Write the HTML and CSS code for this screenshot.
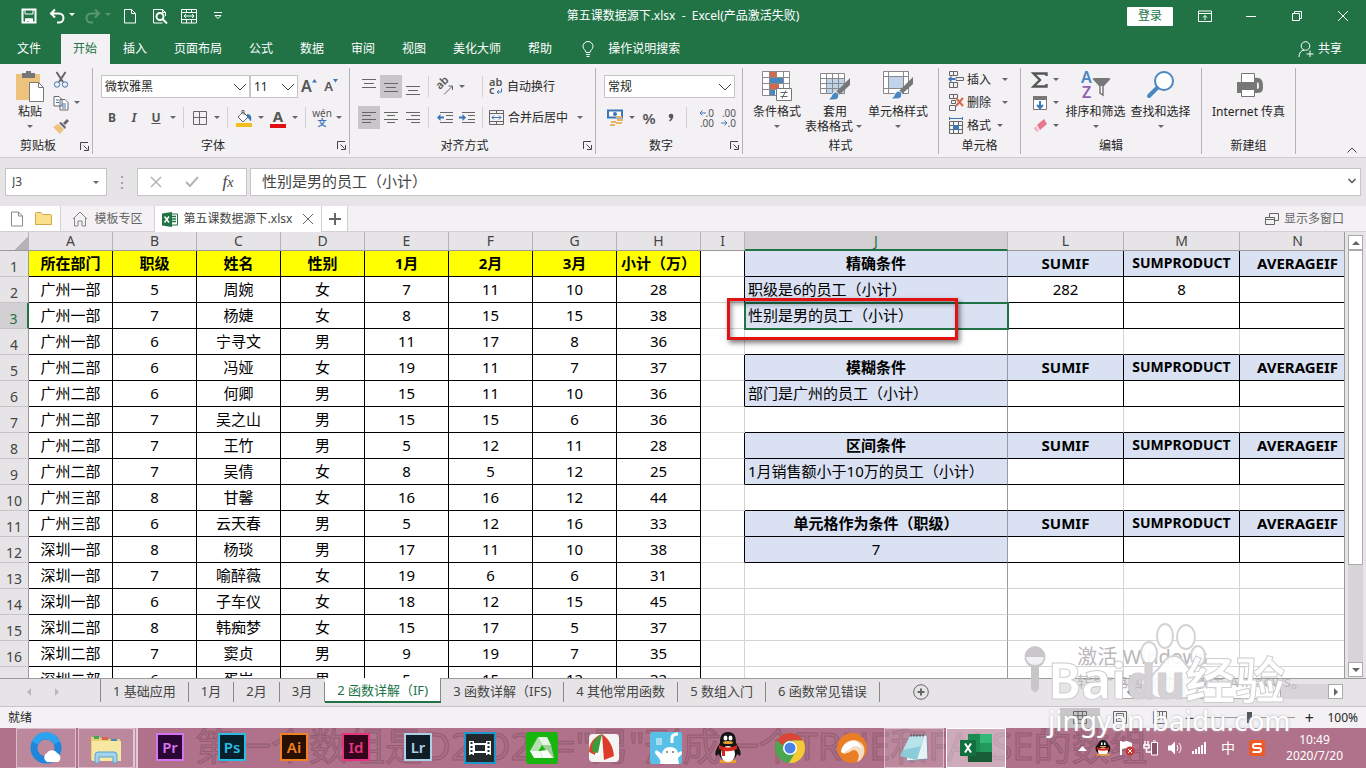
FILE: index.html
```html
<!DOCTYPE html>
<html lang="zh-CN">
<head>
    <meta charset="UTF-8">
    <meta name="viewport" content="width=device-width, initial-scale=1.0">
    <title>第五课数据源下.xlsx - Excel</title>
    <link rel="stylesheet" href="styles.css">
</head>
<body>
    <header class="titlebar">
        <div class="quick">
            <button aria-label="保存"><svg width="16" height="16" viewBox="0 0 16 16"><path d="M1.5 1.5h13v13h-13z" class="w2"/><path d="M4 1v5h8V1M4.500 15v-4h7v4" class="w"/><path d="M4 10.500h8V15H8v-2H6v2H4z" fill="#fff"/></svg></button>
            <button class="wide" aria-label="撤消"><svg width="26" height="16" viewBox="0 0 26 16"><path d="M6 1.500L2 5.500l4 4M2.500 5.500H10a4.500 4.500 0 0 1 0 9H8" class="w2"/><path d="M20 5h6l-3 3z" fill="#fff"/></svg></button>
            <button class="wide dim" aria-label="恢复"><svg width="26" height="16" viewBox="0 0 26 16"><path d="M10 1.500l4 4-4 4M13.500 5.500H6a4.500 4.500 0 0 0 0 9h2" class="w2"/><path d="M20 5h6l-3 3z" fill="#fff"/></svg></button>
            <button aria-label="新建"><svg width="16" height="16" viewBox="0 0 16 16"><path d="M2.500 1.500h7l4 4v9.500h-11zM9.500 1.500v4h4" class="w"/></svg></button>
            <button aria-label="打印预览"><svg width="16" height="16" viewBox="0 0 16 16"><path d="M13.500 8V4.500l-3-3h-9v13.500h9M10.500 1.500v3h3" class="w"/><circle cx="8" cy="8.500" r="3.500" class="w2"/><path d="M10.500 11l4.500 4.500" class="w2"/></svg></button>
            <button aria-label="合并"><svg width="16" height="16" viewBox="0 0 16 16"><path d="M.5 1.500h15v13.500H.5zM.5 4.500h15M.5 11.500h15M5.500 1v3M10.500 1v3M5.500 12v3M10.500 12v3M3 8h10M5 6L3 8l2 2M11 6l2 2-2 2" class="w"/></svg></button>
            <button aria-label="自定义快速访问工具栏"><svg width="10" height="8" viewBox="0 0 10 8"><path d="M1 .5h8M2 3.500h6L5 6.500z" class="w"/></svg></button>
        </div>
        <div class="doc-title">第五课数据源下.xlsx&nbsp; -&nbsp; Excel(产品激活失败)</div>
        <div class="win">
            <button class="login">登录</button>
            <button aria-label="功能区显示选项"><svg width="14" height="12" viewBox="0 0 14 12"><path d="M.5 1h13v10.500H.5zM.5 3.500h13M7 10V5.500M5 7.500l2-2 2 2" class="w"/></svg></button>
            <button aria-label="最小化"><svg width="12" height="12" viewBox="0 0 12 12"><path d="M1 6.500h10" class="w"/></svg></button>
            <button aria-label="还原"><svg width="12" height="12" viewBox="0 0 12 12"><path d="M1.500 3.500h7v7h-7zM3.500 3V1.500h7v7H9" class="w"/></svg></button>
            <button aria-label="关闭"><svg width="12" height="12" viewBox="0 0 12 12"><path d="M1 1l10 10M11 1L1 11" class="w"/></svg></button>
        </div>
    </header>

    <nav class="tabs">
        <button>文件</button>
        <button class="on">开始</button>
        <button>插入</button>
        <button>页面布局</button>
        <button>公式</button>
        <button>数据</button>
        <button>审阅</button>
        <button>视图</button>
        <button>美化大师</button>
        <button>帮助</button>
        <button class="tell"><svg width="12" height="16" viewBox="0 0 12 16"><path d="M4 11.500C4 9 1 8.500 1 5.500a5 5 0 0 1 10 0c0 3-3 3.500-3 6zM4 13.500h4M4.500 15.500h3" class="w"/></svg>操作说明搜索</button>
        <button class="share"><svg width="16" height="16" viewBox="0 0 16 16"><circle cx="7.500" cy="5" r="4.300" class="w"/><path d="M1 16c0-4 2-6.500 5-7M8.500 13h7M12 9.500v6.500" class="w"/></svg>共享</button>
    </nav>

    <section class="ribbon">
        <div class="group g-clip">
            <div class="body">
                <button class="big"><svg width="30" height="32" viewBox="0 0 30 32"><path d="M1 4h24v26H1z" fill="#edc27c"/><path d="M7 3h4V1h5v2h4v5H7z" fill="#777"/><path d="M14.500 12.500h9l5 5v14h-14z" fill="#fff" stroke="#777"/><path d="M23.500 12.500v5h5" fill="none" stroke="#777"/></svg>粘贴<i class="arr"></i></button>
                <div class="stack">
                    <button aria-label="剪切"><svg width="16" height="16" viewBox="0 0 16 16"><path d="M3.500 0l6.500 10M12.500 0L6 10" stroke="#666" stroke-width="2" fill="none"/><circle cx="4" cy="12.500" r="2.700" class="b"/><circle cx="12" cy="12.500" r="2.700" class="b"/></svg></button>
                    <button aria-label="复制"><svg width="16" height="16" viewBox="0 0 16 16"><path d="M1 1.500h5l3 3V11H1zM7 4.500h5l3 3V15H7z" fill="#fff" stroke="#666"/><path d="M3 5h3M3 7.500h3M9 9h4M9 11h4M9 13h4" class="b"/></svg><i class="arr"></i></button>
                    <button aria-label="格式刷"><svg width="16" height="16" viewBox="0 0 16 16"><path d="M0 9l5-3 6 5-4 5z" fill="#edc27c"/><path d="M6 5l2-1 5 5-1 2zM10 5l4-4 2 2-4 4z" fill="#666"/></svg></button>
                </div>
            </div>
            <div class="foot"><span>剪贴板</span><button aria-label="剪贴板选项"><svg width="9" height="9" viewBox="0 0 9 9"><path d="M.5 8V.5H8M3.500 3.500l4 4M8.500 4v4.500H4" class="k"/></svg></button></div>
        </div>

        <div class="group g-font">
            <div class="body rows">
                <div class="row">
                    <label class="combo c-font"><select aria-label="字体"><option>微软雅黑</option></select><svg width="14" height="8" viewBox="0 0 14 8"><path d="M1 1l6 6 6-6" class="k"/></svg></label>
                    <label class="combo c-size"><select aria-label="字号"><option>11</option></select><svg width="14" height="8" viewBox="0 0 14 8"><path d="M1 1l6 6 6-6" class="k"/></svg></label>
                    <button class="tool grow" aria-label="增大字号">A<svg width="5" height="4" viewBox="0 0 5 4"><path d="M0 3.500h5L2.500 0z" fill="#3d76b5"/></svg></button>
                    <button class="tool grow small" aria-label="减小字号">A<svg width="5" height="4" viewBox="0 0 5 4"><path d="M0 0h5L2.500 3.500z" fill="#3d76b5"/></svg></button>
                </div>
                <div class="row">
                    <button class="tool"><b>B</b></button>
                    <button class="tool"><b><em>I</em></b></button>
                    <button class="tool"><b><u>U</u></b></button><i class="arr"></i>
                    <span class="sep"></span>
                    <button class="tool" aria-label="边框"><svg width="14" height="14" viewBox="0 0 14 14"><path d="M.5.5h13v13H.5zM6.500.5v13M.5 6.500h13" class="g"/></svg></button><i class="arr"></i>
                    <span class="sep"></span>
                    <button class="tool" aria-label="填充颜色"><svg width="18" height="18" viewBox="0 0 18 18"><path d="M3 8l5-5 5 5-5 5zM7 5V1.500h2V6" fill="#fff" stroke="#666"/><path d="M12 5c4 0 5 3 4 7-2 0-1-3-4-3z" fill="#3d76b5"/><path d="M1 14h16v4H1z" fill="#f2bd1d"/></svg></button><i class="arr"></i>
                    <button class="tool fontcolor" aria-label="字体颜色"><b>A</b></button><i class="arr"></i>
                    <span class="sep"></span>
                    <button class="tool wen" aria-label="拼音"><span>wén</span><b>文</b></button><i class="arr"></i>
                </div>
            </div>
            <div class="foot"><span>字体</span><button aria-label="字体选项"><svg width="9" height="9" viewBox="0 0 9 9"><path d="M.5 8V.5H8M3.500 3.500l4 4M8.500 4v4.500H4" class="k"/></svg></button></div>
        </div>

        <div class="group g-align">
            <div class="body rows">
                <div class="row">
                    <button class="tool" aria-label="顶端对齐"><svg width="14" height="16" viewBox="0 0 14 16"><path d="M0 .5h14M2 4.500h10M0 8.500h14" class="g"/></svg></button>
                    <button class="tool on" aria-label="垂直居中"><svg width="14" height="16" viewBox="0 0 14 16"><path d="M0 4.500h14M2 8.500h10M0 12.500h14" class="g"/></svg></button>
                    <button class="tool" aria-label="底端对齐"><svg width="14" height="16" viewBox="0 0 14 16"><path d="M0 7.500h14M2 11.500h10M0 15.500h14" class="g"/></svg></button>
                    <span class="sep"></span>
                    <button class="tool" aria-label="方向"><svg width="17" height="16" viewBox="0 0 17 16"><text x="3" y="11" transform="rotate(-45 3 11)" font-size="11" font-weight="600" fill="#555">ab</text><path d="M7 15.500L15.500 7M15.500 11V7h-4" class="g"/></svg></button><i class="arr"></i>
                    <span class="gap"></span>
                    <span class="sep"></span>
                    <button class="text"><svg width="14" height="16" viewBox="0 0 14 16"><text x="0" y="7" font-size="11" font-weight="600" fill="#555">ab</text><text x="0" y="15" font-size="11" font-weight="600" fill="#555">c</text><path d="M12.500 9.500v3.500H8M10 11l-2 2 2 2" class="b"/></svg>自动换行</button>
                </div>
                <div class="row">
                    <button class="tool on" aria-label="左对齐"><svg width="14" height="14" viewBox="0 0 14 14"><path d="M0 1.500h14M0 4.500h9M0 8.500h14M0 11.500h9" class="g"/></svg></button>
                    <button class="tool" aria-label="居中"><svg width="14" height="14" viewBox="0 0 14 14"><path d="M0 1.500h14M3 4.500h8M0 8.500h14M3 11.500h8" class="g"/></svg></button>
                    <button class="tool" aria-label="右对齐"><svg width="14" height="14" viewBox="0 0 14 14"><path d="M0 1.500h14M5 4.500h9M0 8.500h14M5 11.500h9" class="g"/></svg></button>
                    <span class="sep"></span>
                    <button class="tool" aria-label="减少缩进"><svg width="16" height="14" viewBox="0 0 16 14"><path d="M3 1.500h13M9 4.500h7M9 8.500h7M3 11.500h13" class="g"/><path d="M0 6.500L3.500 3v2.500H7v2H3.500V10z" fill="#3d76b5"/></svg></button>
                    <button class="tool" aria-label="增加缩进"><svg width="16" height="14" viewBox="0 0 16 14"><path d="M3 1.500h13M9 4.500h7M9 8.500h7M3 11.500h13" class="g"/><path d="M7 6.500L3.500 3v2.500H0v2h3.500V10z" fill="#3d76b5"/></svg></button>
                    <span class="sep"></span>
                    <button class="text"><svg width="15" height="15" viewBox="0 0 15 15"><path d="M.5.5h14v14H.5zM.5 3.500h14M.5 11.500h14M7.500 0v3M7.500 12v3" class="g"/><path d="M3 7.500h9M5 5.500l-2 2 2 2M10 5.500l2 2-2 2" class="b"/></svg>合并后居中</button><i class="arr far"></i>
                </div>
            </div>
            <div class="foot"><span>对齐方式</span><button aria-label="对齐选项"><svg width="9" height="9" viewBox="0 0 9 9"><path d="M.5 8V.5H8M3.500 3.500l4 4M8.500 4v4.500H4" class="k"/></svg></button></div>
        </div>

        <div class="group g-num">
            <div class="body rows">
                <div class="row">
                    <label class="combo c-num"><select aria-label="数字格式"><option>常规</option></select><svg width="14" height="8" viewBox="0 0 14 8"><path d="M1 1l6 6 6-6" class="k"/></svg></label>
                </div>
                <div class="row">
                    <button class="tool" aria-label="会计数字格式"><svg width="18" height="17" viewBox="0 0 18 17"><path d="M2 1.500h14v7H2z" fill="#fff" stroke="#3d76b5" stroke-width="2"/><circle cx="9" cy="5" r="2" fill="#3d76b5"/><path d="M10 8h6M11 11h6M10 14h6M5 13h5M4 16h5" stroke="#e8b467" stroke-width="2"/></svg></button><i class="arr"></i>
                    <button class="tool pct">%</button>
                    <button class="tool" aria-label="千位分隔样式"><svg width="6" height="10" viewBox="0 0 6 10"><circle cx="3" cy="3" r="2.300" fill="#555"/><path d="M4.500 3q0 3-3 5" fill="none" stroke="#555" stroke-width="1.500"/></svg></button>
                    <span class="sep"></span>
                    <button class="tool dec" aria-label="增加小数位数"><span><svg width="7" height="6" viewBox="0 0 7 6"><path d="M7 3H1M3.500.5L1 3l2.500 2.500" class="b"/></svg>.0</span><span>.00</span></button>
                    <button class="tool dec" aria-label="减少小数位数"><span>.00</span><span><svg width="7" height="6" viewBox="0 0 7 6"><path d="M0 3h6M3.500.5L6 3 3.500 5.500" class="b"/></svg>.0</span></button>
                </div>
            </div>
            <div class="foot"><span>数字</span><button aria-label="数字选项"><svg width="9" height="9" viewBox="0 0 9 9"><path d="M.5 8V.5H8M3.500 3.500l4 4M8.500 4v4.500H4" class="k"/></svg></button></div>
        </div>

        <div class="group g-style">
            <div class="body">
                <button class="big"><svg width="30" height="32" viewBox="0 0 30 32"><path d="M.5 1.500h27v24H.5z" fill="#fff"/><path d="M8 2h6v5H8zM8 14h9v6H8z" fill="#d2694c"/><path d="M8 8h13v5H8zM8 20h5v5H8z" fill="#4a86bf"/><path d="M.5 1.500h27v24H.5zM.5 7.500h27M.5 13.500h27M.5 19.500h27M7.500 1.500v24M14.500 1.500v6M21.500 1.500v24" class="l"/><path d="M14.500 18.500h15v12h-15z" fill="#fff" stroke="#777"/><path d="M18.500 22.500h7M18.500 26.500h7M24 20.500l-4 8" class="g"/></svg>条件格式<i class="arr"></i></button>
                <button class="big"><svg width="30" height="32" viewBox="0 0 30 32"><path d="M.5 3.500h24v20H.5z" fill="#fff"/><path d="M7 9h18v15H7z" fill="#bfd3ea"/><path d="M.5 3.500h24v20H.5zM.5 8.500h24M.5 13.500h24M.5 18.500h24M6.500 3.500v20M12.500 3.500v20M18.500 3.500v20" class="l"/><path d="M30 8v7L19 25l-3-3z" fill="#777"/><path d="M7 30c5-1 4-8 9-8 4 1 4 7-1 8z" fill="#4a86bf" stroke="#fff"/></svg>套用<span>表格格式<i class="arr in"></i></span></button>
                <button class="big"><svg width="30" height="32" viewBox="0 0 30 32"><path d="M.5 1.500h25v22H.5z" fill="#fff"/><path d="M6 7h15v11H6z" fill="#bfd3ea"/><path d="M.5 1.500h25v22H.5zM.5 6.500h25M.5 18.500h25M5.500 1.500v22M20.500 1.500v22" class="l"/><path d="M30 7v7L19 24l-3-3z" fill="#777"/><path d="M7 29c5-1 4-8 9-8 4 1 4 7-1 8z" fill="#4a86bf" stroke="#fff"/></svg>单元格样式<i class="arr"></i></button>
            </div>
            <div class="foot"><span>样式</span></div>
        </div>

        <div class="group g-cells">
            <div class="body stack">
                <button><svg width="16" height="17" viewBox="0 0 16 17"><path d="M1.500.5h8v4h-8zM5.500.5v4M1.500 11.500h8v5h-8zM5.500 11.500v5M8 6.500h7.500v3H8z" class="g"/><path d="M0 8l3.500-3.500V7H7v2H3.500v2.500z" fill="#3d76b5"/></svg>插入<i class="arr in"></i></button>
                <button><svg width="16" height="17" viewBox="0 0 16 17"><path d="M1.500.5h8v4h-8zM5.500.5v4M1.500 11.500h6v5h-6zM3.500 6.500h4v3h-4z" class="g"/><path d="M8 4l7 8M15 4l-7 8" stroke="#d2694c" stroke-width="2"/></svg>删除<i class="arr in"></i></button>
                <button><svg width="16" height="17" viewBox="0 0 16 17"><path d="M1.500 4.500h13v12h-13zM1.500 8.500h13M1.500 12.500h13M5.500 4.500v12M10.500 4.500v12" class="g"/><path d="M5 8h6v5H5z" fill="#3d76b5"/><path d="M1 1.500h13M1.500 0v3M14.500 0v3" class="b"/></svg>格式<i class="arr near"></i></button>
            </div>
            <div class="foot"><span>单元格</span></div>
        </div>

        <div class="group g-edit">
            <div class="body">
                <div class="stack">
                    <button aria-label="求和"><svg width="16" height="16" viewBox="0 0 16 16"><path d="M14.500 4V1.500h-13L8 8l-6.500 6.500h13V12" fill="none" stroke="#555" stroke-width="2.400"/></svg><i class="arr"></i></button>
                    <button aria-label="填充"><svg width="16" height="16" viewBox="0 0 16 16"><path d="M1.500 1.500h13v13h-13z" fill="#fff" stroke="#777"/><path d="M1 1h14v4H1z" fill="#777"/><path d="M8 6v7M5 10l3 3 3-3" stroke="#3d76b5" stroke-width="2" fill="none"/></svg><i class="arr"></i></button>
                    <button aria-label="清除"><svg width="16" height="16" viewBox="0 0 16 16"><path d="M5 7l7-6 3 5-7 6z" fill="#e8788c"/><path d="M1.500 10.500L4 8l3 5-2 1z" fill="#f4b3bf"/></svg><i class="arr"></i></button>
                </div>
                <button class="big"><svg width="30" height="32" viewBox="0 0 30 32"><text x="0" y="13" font-size="16" font-weight="600" fill="#4a86bf">A</text><text x="1" y="28" font-size="16" font-weight="600" fill="#9460b5">Z</text><path d="M13 9.500h15l-6 6.500v9l-3-2v-7z" fill="#fff" stroke="#777" stroke-width="1.500"/><path d="M12 8h17l-7 8h-3z" fill="#777"/></svg>排序和筛选<i class="arr"></i></button>
                <button class="big"><svg width="30" height="32" viewBox="0 0 30 32"><circle cx="18" cy="11" r="9" fill="#fff" stroke="#4a86bf" stroke-width="2"/><path d="M11 18l-8 8" stroke="#4a86bf" stroke-width="4" stroke-linecap="round"/></svg>查找和选择<i class="arr"></i></button>
            </div>
            <div class="foot"><span>编辑</span></div>
        </div>

        <div class="group g-new">
            <div class="body">
                <button class="big"><svg width="30" height="32" viewBox="0 0 30 32"><path d="M3 12h20v11H3zM21 8c7-1 8 4 8 8s0 7-6 7v-4c2 0 2-1 2-3s0-4-4-4z" fill="#777"/><path d="M7.500 3.500h13v9h-13zM7.500 19.500h13v7h-13z" fill="#fff" stroke="#777"/></svg>Internet 传真</button>
            </div>
            <div class="foot"><span>新建组</span></div>
        </div>
        <button class="collapse" aria-label="折叠功能区"><svg width="10" height="6" viewBox="0 0 10 6"><path d="M.5 5.500L5 1l4.500 4.500" class="k"/></svg></button>
    </section>

    <section class="formula">
        <label class="namebox"><input type="text" aria-label="名称框" value="J3"><i class="arr"></i></label>
        <span class="dots">⋮</span>
        <div class="fx">
            <button aria-label="取消"><svg width="12" height="12" viewBox="0 0 12 12"><path d="M1 1l10 10M11 1L1 11" stroke="#b5b3b6" stroke-width="1.500"/></svg></button>
            <button aria-label="输入"><svg width="14" height="12" viewBox="0 0 14 12"><path d="M1 6l4 4 8-9" fill="none" stroke="#b5b3b6" stroke-width="2"/></svg></button>
            <button class="fn"><em>f<small>x</small></em></button>
        </div>
        <label class="bar"><input type="text" aria-label="编辑栏" value="性别是男的员工（小计）"><svg width="8" height="6" viewBox="0 0 8 6"><path d="M.5 1L4 4.500 7.500 1" stroke="#555" stroke-width="1.500" fill="none"/></svg></label>
    </section>

    <nav class="doctabs">
        <div class="files">
            <button aria-label="新建"><svg width="14" height="16" viewBox="0 0 14 16"><path d="M1.500 1h7l4 4v10h-11zM8.500 1v4h4" fill="#fff" stroke="#888"/></svg></button>
            <button aria-label="打开"><svg width="17" height="15" viewBox="0 0 17 15"><path d="M.5 2.500q0-1 1-1H6l2 2h7.500q1 0 1 1v9H.5z" fill="#fbe08c" stroke="#cfa94a"/></svg></button>
        </div>
        <button class="dt"><svg width="16" height="16" viewBox="0 0 16 16"><path d="M1 8l7-7 7 7M2.500 7v8h3.500v-5h4v5h3.500V7" fill="none" stroke="#888"/></svg>模板专区</button>
        <button class="dt on"><svg width="16" height="15" viewBox="0 0 16 15"><path d="M8 2h7.500v11H8z" fill="#fff" stroke="#217346"/><path d="M10 4.500h4M10 7h4M10 9.500h4" stroke="#217346" stroke-width="1.500"/><path d="M0 1.500L10 0v15L0 13.500z" fill="#217346"/><path d="M2.500 4.500l4.500 6M7 4.500l-4.500 6" stroke="#fff" stroke-width="1.500"/></svg>第五课数据源下.xlsx<svg class="x" width="12" height="12" viewBox="0 0 12 12"><path d="M1 1l10 10M11 1L1 11" class="g"/></svg></button>
        <button class="plus" aria-label="新标签"><svg width="12" height="12" viewBox="0 0 12 12"><path d="M6 0v12M0 6h12" stroke="#666" stroke-width="2"/></svg></button>
        <button class="multi"><svg width="14" height="12" viewBox="0 0 14 12"><path d="M.5 4.500h9v7h-9zM.5 6.500h9M4.500 4V.5h9v7H10" class="g"/></svg>显示多窗口</button>
    </nav>

    <main class="sheet">
        <div class="pane">
            <table id="grid">
                <colgroup><col class="cw-row"><col span="8" class="cw-a"><col class="cw-i"><col class="cw-j"><col span="6" class="cw-l"></colgroup>
                <thead></thead>
                <tbody></tbody>
            </table>
            <div class="callout"></div>
        </div>
        <div class="vscroll">
            <button aria-label="向上滚动"><i class="up"></i></button>
            <div class="thumb"></div>
            <div class="track"></div>
            <button aria-label="向下滚动"><i class="down"></i></button>
        </div>
    </main>

    <nav class="sheets">
        <div class="steps"><button aria-label="上一张"><i class="prev"></i></button><button aria-label="下一张"><i class="next"></i></button></div>
        <button class="st">1 基础应用</button>
        <button class="st">1月</button>
        <button class="st">2月</button>
        <button class="st">3月</button>
        <button class="st on">2 函数详解（IF)</button>
        <button class="st">3 函数详解（IFS)</button>
        <button class="st">4 其他常用函数</button>
        <button class="st">5 数组入门</button>
        <button class="st">6 函数常见错误</button>
        <button class="add" aria-label="新工作表"><svg width="16" height="16" viewBox="0 0 16 16"><circle cx="8" cy="8" r="7.300" class="g"/><path d="M8 4.500v7M4.500 8h7" stroke="#666" stroke-width="2"/></svg></button>
        <div class="hscroll">
            <button aria-label="向左滚动"><i class="prev"></i></button>
            <div class="thumb"></div>
            <button aria-label="向右滚动"><i class="next"></i></button>
        </div>
    </nav>

    <footer class="status">
        <span>就绪</span>
        <div class="views">
            <button class="on" aria-label="普通"><svg width="14" height="13" viewBox="0 0 14 13"><path d="M.5.5h13v12H.5zM.5 4.500h13M.5 8.500h13M5 .5v12M9.500.5v12" class="g"/></svg></button>
            <button aria-label="页面布局"><svg width="14" height="13" viewBox="0 0 14 13"><path d="M.5.5h13v12H.5zM3.500 2.500h7v8h-7zM5 5h4M5 7.500h4" class="g"/></svg></button>
            <button aria-label="分页预览"><svg width="14" height="13" viewBox="0 0 14 13"><path d="M.5.5h13v12H.5zM6.500 0v8M.5 8.500h6M9.500 0v8h4" class="g"/></svg></button>
        </div>
        <div class="zoom">
            <button aria-label="缩小">−</button>
            <input type="range" min="0" max="100" value="50" aria-label="缩放">
            <button aria-label="放大">+</button>
            <span>100%</span>
        </div>
    </footer>

    <footer class="taskbar">
        <div class="ghost">第一个数组是D2:D22="男"形成一个TRUE和FALSE的数组</div>
        <button class="task open" aria-label="QQ浏览器"><svg width="32" height="32" viewBox="0 0 32 32"><circle cx="16" cy="16" r="12" fill="none" stroke="#1f86dc" stroke-width="7"/><path d="M5 11A12 12 0 0 1 27 11" fill="none" stroke="#2ba3ee" stroke-width="7"/><path d="M17 30a5 5 0 0 1 0-9 6 6 0 0 1 10 0 5 5 0 0 1 1 9z" fill="#fff"/></svg></button>
        <button class="task open multi2" aria-label="文件资源管理器"><svg width="32" height="32" viewBox="0 0 32 32"><path d="M1 5h9l2 2h18v21H1z" fill="#e9cf72"/><path d="M4 4h5v3H4z" fill="#3fa85a"/><path d="M12 5h6v3h-6z" fill="#d2694c"/><path d="M21 7h6v3h-6z" fill="#4a86bf"/><path d="M2 9h29v20H2z" fill="#f6e7a2"/><path d="M5 31V23q0-3 3-3h16q3 0 3 3v8h-4v-6H9v6z" fill="#9fd3ee" stroke="#5ba3cd"/></svg></button>
        <button class="task adobe pr"><span>Pr</span></button>
        <button class="task adobe ps"><span>Ps</span></button>
        <button class="task adobe ai"><span>Ai</span></button>
        <button class="task adobe id"><span>Id</span></button>
        <button class="task adobe lr"><span>Lr</span></button>
        <button class="task" aria-label="影音"><svg width="32" height="32" viewBox="0 0 32 32"><path d="M1 1h30v30H1z" fill="#23282d" stroke="#2196c8" stroke-width="2"/><path d="M5 9h5v14H5zM22 9h5v14h-5z" fill="#fff"/><path d="M10 12h12v8H10z" fill="#23282d" stroke="#fff" stroke-width="2"/><path d="M7.500 10v13M24.500 10v13" stroke="#23282d" stroke-width="2" stroke-dasharray="2 2"/></svg></button>
        <button class="task" aria-label="绿色应用"><svg width="32" height="32" viewBox="0 0 32 32"><rect width="32" height="32" rx="3" fill="#18b410"/><path d="M12 5h9l4 8h-9z" fill="#e6f5e3"/><path d="M12 5l4 8-6 10-6-4z" fill="#b7e0b1"/><path d="M4 19h10l3 7H8z" fill="#f4fbf2"/><path d="M16 13h9l3 13H17l4-6z" fill="#9fce98"/><path d="M14 19l7-1 6 8H17z" fill="#fff"/></svg></button>
        <button class="task" aria-label="录屏"><svg width="32" height="32" viewBox="0 0 32 32"><rect x="1" y="2" width="30" height="28" rx="4" fill="#f4f4f2"/><path d="M14 2C6 5 1 11 1 20l6 3z" fill="#d9452f"/><path d="M14 2L7 23l5 1z" fill="#fff"/><path d="M14 2C4 8 3 14 5 20l5 1z" fill="#3c9c3a"/><path d="M14 2l2 26 10-4C25 14 21 7 14 2z" fill="#dd3a28"/></svg></button>
        <button class="task" aria-label="小白"><svg width="32" height="32" viewBox="0 0 32 32"><rect width="32" height="32" rx="2" fill="#58bfe6"/><path d="M10 32c1-3 0-5-2-7l-3-4q0-4 3-2l4 3q1-7 8-7t8 6l3-2q2 2 0 4l-3 3 1 6z" fill="#fff"/><path d="M22 11V6q0-4 6-4" stroke="#fff" stroke-width="3" fill="none"/><path d="M6 6h6v7H6z" fill="#a5dcf0"/><path d="M17 19v2M23 19v2" stroke="#333"/></svg></button>
        <button class="task" aria-label="QQ"><svg width="32" height="32" viewBox="0 0 32 32"><path d="M8 28h16v3H8z" fill="#eaa12b"/><path d="M16 0c-7 0-8 5-8 11-3 5-6 9-4 13l3-2c2 9 16 9 18 0l3 2c2-4-1-8-4-13 0-6-1-11-8-11z" fill="#151515"/><ellipse cx="16" cy="22" rx="7" ry="8" fill="#fff"/><ellipse cx="13.500" cy="6" rx="2" ry="2.500" fill="#fff"/><ellipse cx="18.500" cy="6" rx="2" ry="2.500" fill="#fff"/><ellipse cx="16" cy="10.500" rx="5" ry="1.500" fill="#eaa12b"/><path d="M7 13q9 5 18 0v4q-6 3-12 2v5h-3v-6l-3-1z" fill="#d9261c"/></svg></button>
        <button class="task" aria-label="Chrome"><svg width="32" height="32" viewBox="0 0 32 32"><circle cx="16" cy="16" r="15" fill="#4ba64f"/><path d="M3 8.500A15 15 0 0 1 29 8.500H16a7.500 7.500 0 0 0-7 5z" fill="#db4437"/><path d="M29 8.500A15 15 0 0 1 15 31l7-12q2-6-4-10.500z" fill="#f5c935"/><circle cx="16" cy="16" r="7" fill="#fff"/><circle cx="16" cy="16" r="5.500" fill="#4a83e8"/></svg></button>
        <button class="task" aria-label="猎豹浏览器"><svg width="32" height="32" viewBox="0 0 32 32"><circle cx="16" cy="16" r="15" fill="#ea7d25"/><path d="M5 20c1-7 6-12 13-12 8 1 12 7 10 14-1 4-4 7-7 8 3-6 2-11-3-12-3 0-4 3-7 3l-3 1z" fill="#f7dcc2"/><path d="M5 20c1-7 6-11 13-11 4 1 7 4 8 8-3-3-6-4-10-2-3 2-4 4-6 4l-3 2z" fill="#fff"/></svg></button>
        <button class="task open" aria-label="记事本"><svg width="32" height="32" viewBox="0 0 32 32"><path d="M12 4l17-1 1 24-22 2z" fill="#e8f2f4" stroke="#88a"/><path d="M12 4l14 1-7 23L2 24z" fill="#8ccbd8"/><path d="M12 4l14 1-3 9L5 18z" fill="#b9e3ea"/><path d="M12 3.500h15" stroke="#666" stroke-width="2" stroke-dasharray="2 1"/></svg></button>
        <button class="task open active" aria-label="Excel"><svg width="32" height="32" viewBox="0 0 32 32"><path d="M8 2h24v28H8z" fill="#1c8b50"/><path d="M20 2h12v9H20z" fill="#32b877"/><path d="M8 20h24v10H8z" fill="#185c37"/><path d="M20 11h12v9H20z" fill="#219a5c"/><path d="M0 8h16v16H0z" fill="#107040"/><path d="M5 11.500l6 9M11 11.500l-6 9" stroke="#fff" stroke-width="2"/></svg></button>
        <div class="tray">
            <svg width="9" height="5" viewBox="0 0 9 5"><path d="M0 5h9L4.500 0z" fill="#fff"/></svg>
            <svg width="16" height="18" viewBox="0 0 32 32"><ellipse cx="16" cy="17" rx="15" ry="12" fill="#151515"/><circle cx="16" cy="10" r="10" fill="#151515"/><ellipse cx="16" cy="23" rx="10" ry="8" fill="#fff"/><path d="M12 5h3v5h-3zM18 5h3v5h-3z" fill="#fff"/><path d="M4 14q12 6 24 0v5q-12 5-24 0z" fill="#d9261c"/><path d="M10 12h12v2H10zM3 28h26v3H3z" fill="#eaa12b"/></svg>
            <svg width="16" height="16" viewBox="0 0 16 16"><path d="M2 1v14" stroke="#fff" stroke-width="2"/><path d="M3 2l5-1 5 2v6l-5-1-5 1z" fill="#fff"/><circle cx="11" cy="11" r="4.500" fill="#c9342c"/><path d="M9 9l4 4M13 9l-4 4" stroke="#fff"/></svg>
            <svg width="16" height="16" viewBox="0 0 16 16"><path d="M8.500 2.500h6V15h-6zM10 1h3" fill="#8a5468" stroke="#fff"/><path d="M2 1v4M5 1v4M1 5h5v3H1zM3.500 8v4H8" fill="none" stroke="#fff" stroke-width="1.500"/></svg>
            <svg width="16" height="16" viewBox="0 0 16 16"><path d="M1 5.500h3l4-4v13l-4-4H1z" fill="#fff"/><path d="M10 5q2 3 0 6M12 3q4 5 0 10" fill="none" stroke="#fff"/></svg>
            <svg width="16" height="16" viewBox="0 0 16 16"><path d="M1 11h2v3H1zM4 9h2v5H4zM7 7h2v7H7zM10 5h2v9h-2zM13 2h2v12h-2z" fill="#fff"/></svg>
            <span class="ime">中</span>
            <svg width="16" height="16" viewBox="0 0 16 16"><rect width="16" height="16" rx="2" fill="#ef5a24"/><path d="M12.500 4H6q-2 0-2 2t2 2h4q2 0 2 2t-2 2H3.500" fill="none" stroke="#fff" stroke-width="2"/></svg>
            <div class="clock"><span>10:49</span><span>2020/7/20</span></div>
        </div>
    </footer>

    <div class="activate">
        <svg width="28" height="50" viewBox="0 0 28 50"><path d="M12 2a11 11 0 0 1 4 21v22l-4 4-4-4V23A11 11 0 0 1 12 2z" fill="#c9c6ca"/><path d="M3 13a9 8 0 0 0 18 0z" fill="#f1f0f2"/></svg>
        <div><p class="a1">激活 Windows</p><p class="a2">转到“电脑设置”以激活 Windows。</p></div>
    </div>
    <div class="mark">
        <svg width="66" height="82" viewBox="0 0 66 82"><g fill="#fff" fill-opacity=".9" stroke="#d4d2d5" stroke-width="2"><ellipse cx="25" cy="14" rx="8" ry="12"/><ellipse cx="46" cy="15" rx="9" ry="12"/><ellipse cx="9" cy="31" rx="8" ry="11"/><ellipse cx="58" cy="34" rx="7" ry="10"/><path d="M34 34c9 0 10 9 18 15 12 12 6 28-8 27H24C8 78 4 62 15 50c8-6 9-16 19-16z"/></g></svg>
        <p class="m1">Bai<span>du</span>经验</p>
        <p class="m2">jingyan.baidu.com</p>
    </div>

    <script src="script.js"></script>
</body>
</html>
```

FILE: styles.css
```css
* {
    box-sizing: border-box;
}
body {
    margin: 0;
    height: 100vh;
    overflow: hidden;
    display: flex;
    flex-direction: column;
    position: relative;
    font-family: "Noto Sans", "Noto Sans CJK SC", sans-serif;
    font-size: 12px;
    line-height: 16px;
    color: #262626;
    background: #e6e4e7;
}
button {
    border: 0;
    padding: 0;
    margin: 0;
    background: none;
    font: inherit;
    color: inherit;
    display: flex;
    align-items: center;
    justify-content: center;
    white-space: nowrap;
}
p {
    margin: 0;
}
input, select {
    font: inherit;
    color: inherit;
    border: 0;
    padding: 0;
    background: none;
    appearance: none;
    outline: 0;
}
svg {
    display: block;
    flex: none;
    overflow: visible;
}

/* icon strokes */
.w { fill: none; stroke: #fff; }
.w2 { fill: none; stroke: #fff; stroke-width: 2; }
.k { fill: none; stroke: #444; }
.g { fill: none; stroke: #666; }
.l { fill: none; stroke: #8a888b; }
.b { fill: none; stroke: #3d76b5; }

/* title bar */
.titlebar {
    flex: none;
    height: 34px;
    display: grid;
    grid-template-columns: 1fr auto 1fr;
    align-items: center;
    padding-bottom: 2px;
    background: #217346;
    color: #fff;
}
.quick {
    display: flex;
    gap: 12px;
    padding-left: 20px;
}
.quick button {
    width: 17px;
    height: 24px;
}
.quick .wide {
    width: 26px;
    margin-right: -2px;
}
.quick button:nth-child(4) {
    margin-right: 1px;
}
.dim {
    opacity: .25;
}
.win {
    display: flex;
    justify-content: flex-end;
    align-items: center;
}
.win button {
    width: 46px;
    height: 24px;
}
.win .login {
    height: 19px;
    margin-right: 9px;
    border-radius: 1px;
    background: #fff;
    color: #217346;
}

/* ribbon tabs */
.tabs {
    flex: none;
    height: 30px;
    display: flex;
    background: #217346;
    color: #fff;
}
.tabs button {
    padding: 0 14px 0 13px;
}
.tabs button:first-child {
    width: 58px;
    padding: 0;
    margin-right: 3px;
}
.tabs .on {
    width: 49px;
    background: #f3f1f4;
    color: #217346;
}
.tabs .tell {
    gap: 14px;
    padding: 0 16px;
}
.tabs .share {
    margin-left: auto;
    gap: 4px;
    padding-right: 24px;
}

/* ribbon */
.ribbon {
    flex: none;
    height: 94px;
    display: flex;
    padding-top: 4px;
    background: #f3f1f4;
    border-bottom: 1px solid #cfcdd0;
}
.group {
    height: 86px;
    display: flex;
    flex-direction: column;
    flex: none;
    border-right: 1px solid #b5b3b6;
}
.body {
    display: flex;
    height: 71px;
}
.foot {
    display: flex;
    align-items: center;
    height: 17px;
}
.foot span {
    flex: 1;
    text-align: center;
}
.foot span + button {
    width: 16px;
    height: 12px;
}
.rows {
    flex-direction: column;
    gap: 8px;
    padding: 7px 0 0 8px;
}
.row {
    display: flex;
    align-items: center;
    height: 23px;
}
.tool {
    width: 22px;
    height: 23px;
    color: #555;
}
.tool.on {
    background: #c8c6c9;
}
.arr {
    flex: none;
    width: 12px;
    height: 3px;
    display: flex;
    justify-content: center;
}
.arr::before {
    content: "";
    border: 3px solid transparent;
    border-top-color: #666;
    border-bottom: 0;
}
.sep {
    width: 1px;
    height: 21px;
    margin: 0 5px 0 4px;
    background: #d2d0d3;
}
.gap {
    width: 10px;
}
.big {
    flex-direction: column;
    justify-content: flex-start;
    padding-top: 2px;
    height: 70px;
    line-height: 15px;
}
.big svg {
    margin-bottom: 2px;
}
.big > .arr {
    margin-top: 6px;
}
.big span {
    display: flex;
    align-items: center;
}
.stack {
    display: flex;
    flex-direction: column;
}
.stack button {
    height: 23px;
    justify-content: flex-start;
    gap: 2px;
}
.g-clip { width: 93px; }
.g-clip .big { width: 42px; margin-left: 8px; padding-left: 2px; }
.g-clip .stack { margin-left: 3px; }
.g-font { width: 257px; }
.g-align { width: 246px; }
.g-num { width: 147px; }
.g-style { width: 196px; }
.g-style .body { padding-left: 5px; }
.g-style .big { width: 58px; }
.g-style .big:last-child { width: 68px; }
.g-cells { width: 82px; }
.g-cells .body { padding-left: 9px; }
.g-cells button { gap: 3px; }
.g-cells .in { margin-left: 5px; }
.g-edit { width: 181px; }
.g-edit .stack { width: 42px; padding-left: 11px; }
.g-edit .big { width: 65px; }
.g-new { width: 94px; }
.g-new .big { width: 93px; }

.combo {
    position: relative;
    height: 23px;
    border: 1px solid #c6c4c7;
    background: #fff;
}
.combo select {
    width: 100%;
    height: 21px;
    padding-left: 3px;
}
.combo svg {
    position: absolute;
    right: 2px;
    top: 7px;
    pointer-events: none;
}
.c-font { width: 149px; }
.c-size { width: 48px; }
.c-num { width: 131px; }
.grow {
    align-items: flex-start;
    font-size: 16px;
    font-weight: 600;
    line-height: 23px;
}
.small {
    font-size: 13px;
}
.grow svg {
    margin-top: 4px;
}
.fontcolor {
    height: 20px;
    width: 16px;
    margin: 0 3px;
    font-size: 15px;
    line-height: 14px;
    border-bottom: 4px solid #e01010;
}
.wen {
    flex-direction: column;
    font-size: 10px;
    line-height: 10px;
}
.wen b {
    font-size: 9px;
    color: #3d76b5;
}
.text {
    gap: 4px;
    padding-left: 1px;
}
.far {
    margin-left: 6px;
}
.pct {
    font-size: 15px;
    font-weight: 600;
}
.dec {
    flex-direction: column;
    align-items: flex-end;
    font-size: 10px;
    line-height: 10px;
}
.dec span {
    display: flex;
    align-items: center;
}
.collapse {
    margin: auto 9px 4px auto;
}

/* formula bar */
.formula {
    flex: none;
    height: 48px;
    display: flex;
    align-items: center;
    padding: 0 5px;
    color: #444;
}
.namebox, .fx, .bar {
    display: flex;
    align-items: center;
    height: 28px;
    border: 1px solid #c6c4c7;
    background: #fff;
}
.namebox {
    width: 102px;
    padding: 0 4px 0 6px;
}
.namebox input {
    flex: 1;
    min-width: 0;
}
.dots {
    width: 30px;
    text-align: center;
    font-size: 16px;
    color: #999;
}
.fx {
    width: 110px;
}
.fx button {
    flex: 1;
}
.fn {
    font-family: "Liberation Serif", serif;
    font-size: 17px;
}
.fn small {
    font-size: 14px;
}
.bar {
    flex: 1;
    margin-left: 3px;
    padding: 0 4px 2px 11px;
}
.bar input {
    flex: 1;
    font-size: 15px;
}

/* document tabs */
.doctabs {
    flex: none;
    height: 26px;
    display: flex;
    background: #f3f1f4;
    border-bottom: 1px solid #d2d0d3;
    color: #666;
}
.files {
    display: flex;
    gap: 11px;
    width: 61px;
    padding-left: 10px;
    background: #fff;
    border-right: 1px solid #d2d0d3;
}
.dt {
    gap: 6px;
    width: 94px;
    border-right: 1px solid #d2d0d3;
}
.dt.on {
    width: 167px;
    height: 26px;
    background: #fff;
    color: #444;
}
.dt .x {
    margin-left: 4px;
}
.plus {
    width: 26px;
    background: #fff;
    border-right: 1px solid #d2d0d3;
}
.multi {
    margin-left: auto;
    margin-right: 22px;
    gap: 5px;
}

/* worksheet */
.sheet {
    flex: 1;
    min-height: 0;
    display: flex;
}
.pane {
    position: relative;
    flex: 1;
    min-width: 0;
    overflow: hidden;
    background: #fff;
    border-right: 1px solid #9b999c;
}
#grid {
    table-layout: fixed;
    width: 1704px;
    border-collapse: separate;
    border-spacing: 0;
    font-size: 15px;
    line-height: 20px;
    color: #000;
}
.cw-row { width: 29px; }
.cw-a { width: 84px; }
.cw-i { width: 44px; }
.cw-j { width: 263px; }
.cw-l { width: 116px; }
#grid th, #grid td {
    height: 26px;
    padding: 0 0 2px;
    text-align: center;
    white-space: nowrap;
    border-right: 1px solid #d4d4d4;
    border-bottom: 1px solid #d4d4d4;
}
#grid thead th {
    height: 19px;
    padding: 0;
    font-size: 14px;
    line-height: 16px;
    font-weight: normal;
    color: #444;
    background: #e6e4e7;
    border-right-color: #b5b3b6;
    border-bottom-color: #9b999c;
}
#grid thead .sel {
    background: #d2d0d3;
    color: #217346;
    border-bottom: 2px solid #217346;
}
#grid thead th:first-child {
    background: linear-gradient(135deg, #e6e4e7 70%, #b5b3b6 70%);
}
#grid tbody th {
    padding: 6px 0 0;
    font-size: 14px;
    line-height: 19px;
    font-weight: normal;
    color: #444;
    background: #e6e4e7;
    border-right-color: #9b999c;
    border-bottom-color: #c6c4c7;
}
#grid tbody .sel {
    background: #d2d0d3;
    color: #217346;
    border-right: 2px solid #217346;
}
#grid .bx {
    border-right-color: #000;
    border-bottom-color: #000;
}
#grid .ul {
    border-bottom-color: #000;
}
#grid .rt {
    border-right-color: #000;
}
#grid .yellow {
    background: #ff0;
    font-weight: bold;
}
#grid .blue {
    background: #d9e1f2;
}
#grid .head {
    font-weight: bold;
}
#grid .long {
    font-size: 14px;
}
#grid .j {
    border-right-color: #9b999c;
}
#grid .lead {
    text-align: left;
    padding-left: 3px;
}
#grid .cur {
    outline: 2px solid #217346;
    outline-offset: -1px;
    border-bottom-color: #217346;
}
.callout {
    position: absolute;
    left: 727px;
    top: 66px;
    width: 231px;
    height: 42px;
    border: 3px solid #e31212;
    box-shadow: 2px 3px 5px rgba(0, 0, 0, .5), inset 2px 3px 5px rgba(0, 0, 0, .4);
}
.vscroll {
    flex: none;
    width: 21px;
    padding: 3px 3px 1px;
    display: flex;
    flex-direction: column;
}
.vscroll button, .hscroll button {
    width: 15px;
    height: 15px;
    background: #fff;
    border: 1px solid #ababab;
}
.thumb {
    background: #fff;
    border: 1px solid #ababab;
}
.vscroll .thumb {
    flex: 317;
}
.track {
    flex: 98;
    background: #d6d4d7;
}
.up, .down, .prev, .next {
    border: 4px solid transparent;
}
.up { border-bottom-color: #666; border-top: 0; }
.down { border-top-color: #666; border-bottom: 0; }
.prev { border-right-color: #666; border-left: 0; }
.next { border-left-color: #666; border-right: 0; }

/* sheet tabs */
.sheets {
    flex: none;
    height: 29px;
    display: flex;
    border-top: 1px solid #9b999c;
    border-bottom: 1px solid #c6c4c7;
    font-size: 13px;
    color: #444;
}
.steps {
    width: 101px;
    display: flex;
    gap: 24px;
    padding-left: 27px;
    opacity: .35;
    height: 26px;
}
.st {
    position: relative;
    height: 23px;
    padding: 0 13px 0 12px;
}
.st::after {
    content: "";
    position: absolute;
    right: 0;
    top: 3px;
    bottom: 0;
    border-right: 1px solid #8a888b;
}
.st:nth-child(2) {
    border-left: 1px solid #8a888b;
    margin-left: -1px;
}
.st.on {
    height: 25px;
    margin-top: -1px;
    background: #fff;
    color: #217346;
    border-bottom: 2px solid #217346;
}
.st.on::after {
    top: 0;
}
.add {
    margin-left: 33px;
    height: 26px;
}
.hscroll {
    display: flex;
    width: 222px;
    height: 15px;
    margin: 5px 23px 0 auto;
    background: #d6d4d7;
}
.hscroll .thumb {
    width: 96px;
    margin: 0 auto 0 49px;
}

/* status bar */
.status {
    flex: none;
    height: 21px;
    display: flex;
    align-items: center;
    padding: 0 8px;
    background: #f3f1f4;
}
.views {
    display: flex;
    margin-left: auto;
}
.views button {
    width: 40px;
    height: 20px;
}
.views .on {
    background: #c8c6c9;
}
.zoom {
    display: flex;
    align-items: center;
    gap: 5px;
    margin-left: 2px;
}
.zoom button {
    width: 14px;
    font-size: 16px;
}
.zoom input {
    width: 92px;
    height: 14px;
    background: linear-gradient(#999, #999) center / 100% 1px no-repeat;
}
.zoom input::-webkit-slider-thumb {
    appearance: none;
    width: 5px;
    height: 11px;
    background: #555;
}
.zoom span {
    padding-left: 6px;
}

/* task bar */
.taskbar {
    position: relative;
    flex: none;
    height: 40px;
    display: flex;
    align-items: center;
    gap: 2px;
    padding-left: 16px;
    overflow: hidden;
    background: #b0728a;
    color: #fff;
}
.ghost {
    position: absolute;
    left: 195px;
    top: 0;
    font-size: 38px;
    line-height: 34px;
    white-space: nowrap;
    color: #a96d85;
    -webkit-text-stroke: 1px #935c72;
}
.task {
    position: relative;
    width: 60px;
    height: 40px;
}
.open {
    background: rgba(255, 255, 255, .16);
    border: 1px solid rgba(255, 255, 255, .45);
}
.multi2 {
    border-right: 5px double rgba(255, 255, 255, .55);
}
.active {
    background: rgba(255, 255, 255, .4);
    border-color: #fff;
}
.adobe span {
    width: 28px;
    height: 28px;
    margin-bottom: 2px;
    border: 2px solid;
    font-size: 15px;
    font-weight: 600;
    line-height: 24px;
}
.pr span { color: #d673f0; background: #2a0634; }
.ps span { color: #29bde4; background: #08202c; }
.ai span { color: #f08220; background: #2a1003; }
.id span { color: #e83382; background: #32051a; }
.lr span { color: #acd0e6; background: #101c26; }
.tray {
    position: relative;
    display: flex;
    align-items: center;
    gap: 8px;
    margin-left: auto;
    padding-right: 23px;
}
.ime {
    font-size: 14px;
    padding: 0 6px;
}
.clock {
    display: flex;
    flex-direction: column;
    align-items: center;
    padding-left: 13px;
}

/* overlays */
.activate {
    position: absolute;
    right: 60px;
    bottom: 74px;
    display: flex;
    gap: 26px;
    color: #b9b7ba;
    pointer-events: none;
    white-space: nowrap;
}
.a1 {
    font-size: 20px;
    line-height: 26px;
}
.a2 {
    font-size: 15px;
    line-height: 22px;
}
.mark {
    position: absolute;
    right: 74px;
    bottom: 32px;
    width: 244px;
    color: #fff;
    pointer-events: none;
    white-space: nowrap;
}
.mark svg {
    position: absolute;
    left: 92px;
    bottom: 32px;
}
.m1 {
    position: relative;
    font-size: 50px;
    font-weight: bold;
    line-height: 46px;
    -webkit-text-stroke: 1px #cfcdd0;
}
.m1 span {
    color: #d4d2d5;
    font-size: 46px;
}
.m2 {
    position: relative;
    font-size: 28px;
    line-height: 32px;
    text-shadow: 0 0 3px #b5b3b6;
}
```

FILE: script.js
```js
const names = ['A', 'B', 'C', 'D', 'E', 'F', 'G', 'H', 'I', 'J', 'L', 'M', 'N', 'O', 'P', 'Q'];

const rows = [
    ['所在部门', '职级', '姓名', '性别', '1月', '2月', '3月', '小计（万）'],
    ['广州一部', 5, '周婉', '女', 7, 11, 10, 28],
    ['广州一部', 7, '杨婕', '女', 8, 15, 15, 38],
    ['广州一部', 6, '宁寻文', '男', 11, 17, 8, 36],
    ['广州二部', 6, '冯娅', '女', 19, 11, 7, 37],
    ['广州二部', 6, '何卿', '男', 15, 11, 10, 36],
    ['广州二部', 7, '吴之山', '男', 15, 15, 6, 36],
    ['广州二部', 7, '王竹', '男', 5, 12, 11, 28],
    ['广州二部', 7, '吴倩', '女', 8, 5, 12, 25],
    ['广州三部', 8, '甘馨', '女', 16, 16, 12, 44],
    ['广州三部', 6, '云天春', '男', 5, 12, 16, 33],
    ['深圳一部', 8, '杨琰', '男', 17, 11, 10, 38],
    ['深圳一部', 7, '喻醉薇', '女', 19, 6, 6, 31],
    ['深圳一部', 6, '子车仪', '女', 18, 12, 15, 45],
    ['深圳二部', 8, '韩痴梦', '女', 15, 17, 5, 37],
    ['深圳二部', 7, '窦贞', '男', 9, 19, 7, 35],
    ['深圳二部', 6, '蛋岩', '男', 5, 15, 12, 32]
];

// criteria blocks on the right, keyed by row number
const heads = { 1: '精确条件', 5: '模糊条件', 8: '区间条件', 11: '单元格作为条件（职级）' };
const conds = {
    2: ['职级是6的员工（小计）', 282, 8, ''],
    3: ['性别是男的员工（小计）', '', '', ''],
    6: ['部门是广州的员工（小计）', '', '', ''],
    9: ['1月销售额小于10万的员工（小计）', '', '', ''],
    12: [7, '', '', '']
};

function cell(tag, text, cls) {
    const el = document.createElement(tag);
    el.textContent = text;
    if (cls) el.className = cls;
    return el;
}

const letters = document.createElement('tr');
letters.append(cell('th', ''));
names.forEach(n => letters.append(cell('th', n, n === 'J' ? 'sel' : '')));
document.querySelector('#grid thead').append(letters);

const tbody = document.querySelector('#grid tbody');
rows.forEach((row, i) => {
    const n = i + 1;
    const tr = document.createElement('tr');
    // the last row is only half visible, its number stays below the edge
    tr.append(cell('th', n === rows.length ? '' : n, n === 3 ? 'sel' : ''));
    row.forEach(v => tr.append(cell('td', v, n === 1 ? 'bx yellow' : 'bx')));

    const block = heads[n] || conds[n];
    tr.append(cell('td', '', block ? 'rt' : ''));
    // the row above a block header carries its top border
    const line = heads[n + 1] ? 'ul' : '';
    if (heads[n]) {
        tr.append(cell('td', heads[n], 'ul j blue head'));
        ['SUMIF', 'SUMPRODUCT', 'AVERAGEIF'].forEach(t => {
            tr.append(cell('td', t, 'bx blue head' + (t.length > 9 ? ' long' : '')));
        });
    } else if (conds[n]) {
        const c = conds[n];
        tr.append(cell('td', c[0], 'ul j blue' + (n === 12 ? '' : ' lead') + (n === 3 ? ' cur' : '')));
        c.slice(1).forEach(t => tr.append(cell('td', t, 'bx')));
    } else {
        tr.append(cell('td', '', 'j ' + line));
        for (let k = 0; k < 3; k++) tr.append(cell('td', '', line));
    }
    for (let k = 0; k < 3; k++) tr.append(cell('td', ''));
    tbody.append(tr);
});
```
